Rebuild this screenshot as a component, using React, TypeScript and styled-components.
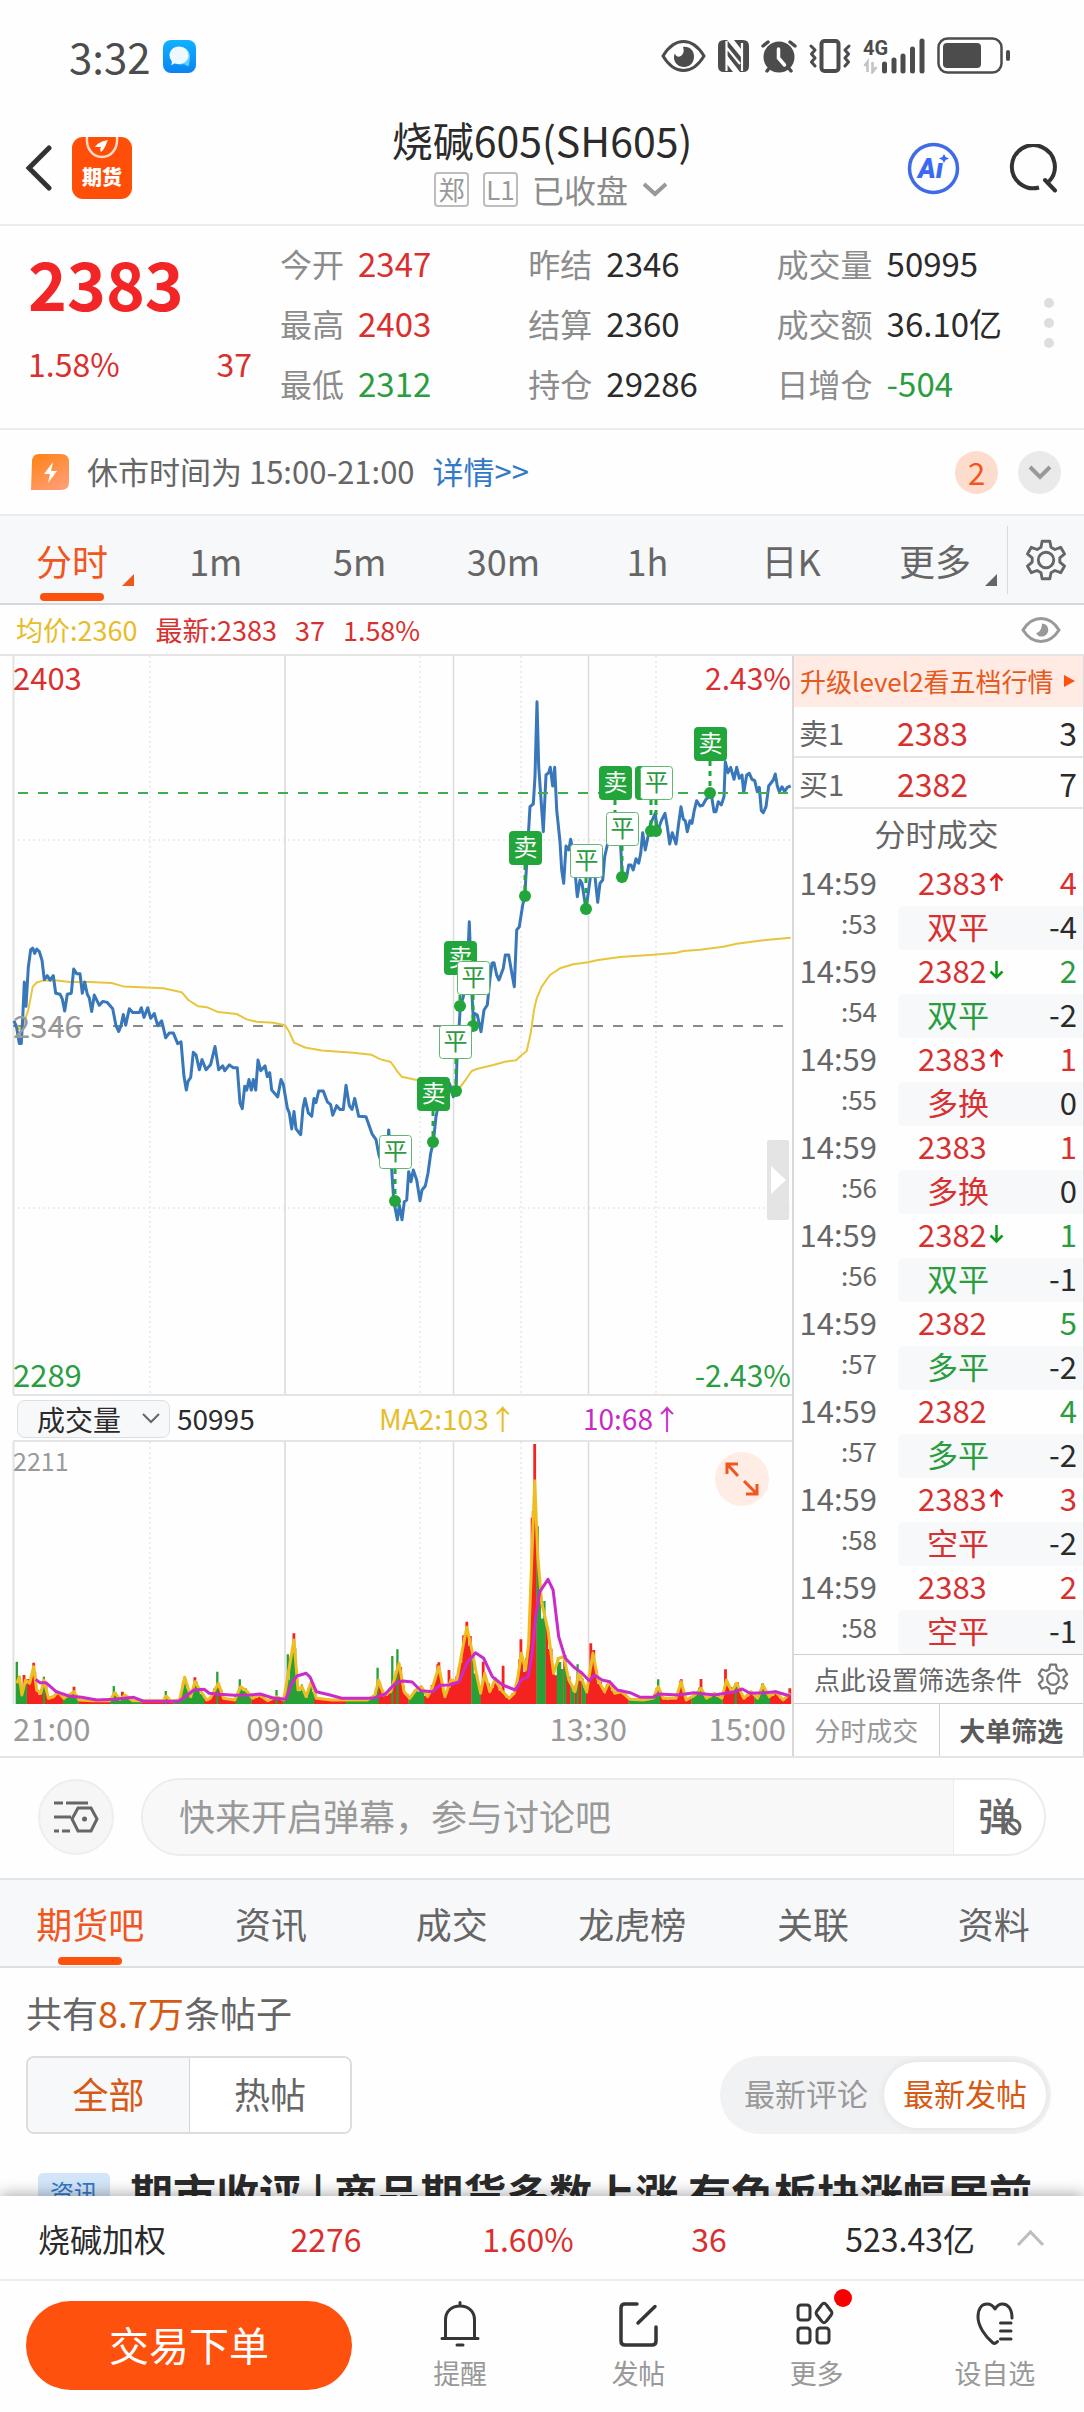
import React, { useState } from 'react';
import styled, { createGlobalStyle } from 'styled-components';

const C = {
  red: '#d9302f',
  up: '#f22626',
  green: '#2a9d3f',
  orange: '#f0561d',
  brand: '#ff510e',
  ink: '#2b2b2b',
  text: '#666666',
  mute: '#8c8c8c',
  faint: '#999999',
  line: '#e4e4e4',
  panel: '#f7f8fa',
};

type Tone = 'red' | 'green' | 'ink';

const GlobalStyle = createGlobalStyle`
  *, *::before, *::after { box-sizing: border-box; }
  html, body, #root { height: 100%; }
  body {
    margin: 0;
    background: #fefefe;
    color: ${C.ink};
    font-family: "Noto Sans CJK SC", "Noto Sans", sans-serif;
    overflow: hidden;
  }
  button, input, select {
    font: inherit;
    color: inherit;
    border: 0;
    padding: 0;
    margin: 0;
    background: none;
    border-radius: 0;
  }
  button { cursor: pointer; }
  a { text-decoration: none; }
  svg { display: block; flex: none; }
`;

/* ---------- shell ---------- */

const Shell = styled.div`
  display: flex;
  flex-direction: column;
  height: 100vh;
  background: #fefefe;
`;

const Scroller = styled.main`
  flex: 1;
  min-height: 0;
  overflow-y: auto;
  scrollbar-width: none;
`;

/* ---------- status bar ---------- */

const StatusBar = styled.div`
  display: flex;
  align-items: center;
  justify-content: space-between;
  height: 112px;
  padding: 0 74px 0 69px;
  color: #4c4c4c;
`;

const StatusGroup = styled.div`
  display: flex;
  align-items: center;
  gap: 12px;
`;

const Clock = styled.span`
  font-size: 42px;
  line-height: 48px;
`;

const StatusIcons = () => (
  <StatusGroup>
    <svg width="45" height="32" viewBox="0 0 45 32" fill="none" stroke="#4c4c4c" strokeWidth="3">
      <path d="M2 16C8 6 15 1.500 22.500 1.500S37 6 43 16C37 26 30 30.500 22.500 30.500S8 26 2 16Z" />
      <path d="M22 7c6-1 11 3 11 9.500S28.500 27 23 27s-10-4-10-9.500c0-1.500.2-2.500.8-4 1 3 3.500 4 6 2.500 3-2 3.500-5 2.200-9Z" fill="#4c4c4c" stroke="none" />
    </svg>
    <svg width="31" height="32" viewBox="0 0 31 32">
      <path d="M6 0h3l14 17V9L16 0h9q6 0 6 6v20q0 6-6 6h-3L8 14v9l7 9H6q-6 0-6-6V6q0-6 6-6Z" fill="#4c4c4c" />
      <path d="M8.500 1v30M9 8l13 16M24 3v28" stroke="#fefefe" strokeWidth="2.200" fill="none" />
    </svg>
    <svg width="36" height="34" viewBox="0 0 36 34" fill="none" stroke="#4c4c4c" strokeWidth="4" strokeLinecap="round">
      <circle cx="18" cy="18" r="15.500" fill="#4c4c4c" stroke="none" />
      <path d="M2 7l5-4M34 7l-5-4M6 32l4-5M30 32l-4-5" strokeWidth="3.500" />
      <path d="M17.500 10v9l6 7" stroke="#fefefe" strokeWidth="3.500" />
    </svg>
    <svg width="42" height="34" viewBox="0 0 42 34" fill="none" stroke="#4c4c4c" strokeWidth="3" strokeLinejoin="round" strokeLinecap="round">
      <rect x="12.500" y="2" width="17" height="30" rx="3" strokeWidth="4" />
      <path d="M2 7l4 4-3.500 4L6 19l-3.500 4L6 27M40 7l-4 4 3.500 4L36 19l3.500 4L36 27" />
    </svg>
    <svg width="62" height="36" viewBox="0 0 62 36">
      <text x="0" y="17" fontSize="20" fontWeight="700" fill="#4c4c4c" fontFamily="Roboto, sans-serif">4G</text>
      <path d="M4.500 34V24l-3 4M9.500 24v10l4-5" stroke="#c4c4c4" strokeWidth="2.600" fill="none" />
      <path d="M21.500 26v7M31 22v11M40 18v15M49.500 11v22M59 3v30" stroke="#4c4c4c" strokeWidth="5" strokeLinecap="round" />
    </svg>
    <svg width="73" height="38" viewBox="0 0 73 38">
      <rect x="1.500" y="1.500" width="63" height="34" rx="9" fill="none" stroke="#4c4c4c" strokeWidth="2.500" />
      <rect x="6" y="6" width="38" height="25" rx="4" fill="#4c4c4c" />
      <rect x="69" y="13" width="4" height="11" rx="2" fill="#4c4c4c" />
    </svg>
  </StatusGroup>
);

const MessageBadge = () => (
  <svg width="33" height="33" viewBox="0 0 33 33">
    <defs>
      <linearGradient id="msg" x1="0" y1="0" x2="0" y2="1">
        <stop offset="0" stopColor="#0fb2ff" />
        <stop offset="1" stopColor="#0a83f2" />
      </linearGradient>
    </defs>
    <rect width="33" height="33" rx="8" fill="url(#msg)" />
    <path d="M17 7c6 0 10 4 10 9 0 4-1 6-1 10-2 0-4-1-5-2-8 2-14-2-14-8 0-5 4-9 10-9Z" fill="#5fd0ff" />
    <path d="M16 6.500c5.500 0 9.500 4 9.500 8.800S21.500 24 16 24c-1.500 0-3-.3-4-.8-1 .8-2.500 1.500-4 1.500.8-1 1-2.300.8-3.500A8.500 8.500 0 0 1 6.500 15.300c0-4.800 4-8.800 9.500-8.800Z" fill="#eef8ff" />
  </svg>
);

/* ---------- title bar ---------- */

const TitleBar = styled.header`
  display: grid;
  grid-template-columns: 1fr auto 1fr;
  align-items: center;
  height: 114px;
  padding: 0 26px;
  border-bottom: 2px solid #ececec;
`;

const BarSide = styled.div<{ $end?: boolean; $gap: number }>`
  display: flex;
  align-items: center;
  justify-content: ${(p) => (p.$end ? 'flex-end' : 'flex-start')};
  gap: ${(p) => p.$gap}px;
`;

const TitleStack = styled.div`
  display: flex;
  flex-direction: column;
  align-items: center;
  padding-bottom: 10px;
`;

const Title = styled.h1`
  margin: 0;
  font-size: 41px;
  font-weight: 400;
  line-height: 52px;
`;

const Subtitle = styled.button`
  display: flex;
  align-items: center;
  gap: 14px;
  height: 48px;
  padding-left: 18px;
  font-size: 32px;
  line-height: 44px;
  color: ${C.mute};
`;

const Tag = styled.span`
  display: grid;
  place-items: center;
  width: 35px;
  height: 35px;
  border: 2px solid #bdbdbd;
  border-radius: 4px;
  font-size: 26px;
  line-height: 30px;
  color: #999;
`;

const IconButton = styled.button`
  display: grid;
  place-items: center;
`;

const Chevron = ({ w, h, color, width = 4, up = false }: { w: number; h: number; color: string; width?: number; up?: boolean }) => (
  <svg width={w} height={h} viewBox={`0 0 ${w} ${h}`} fill="none" stroke={color} strokeWidth={width}>
    <path d={up ? `M2 ${h - 2}L${w / 2} 3L${w - 2} ${h - 2}` : `M2 2L${w / 2} ${h - 3}L${w - 2} 2`} />
  </svg>
);

const LogoBox = styled.div`
  display: flex;
  flex-direction: column;
  align-items: center;
  width: 60px;
  height: 62px;
  border-radius: 11px;
  background: #ff4e08;
  color: #fff;
  font-size: 20px;
  font-weight: 900;
  line-height: 30px;
`;

const Logo = () => (
  <LogoBox>
    <svg width="40" height="25" viewBox="0 0 40 25">
      <path d="M5 0C4 12 11 20 20 20S36 12 35 0" fill="none" stroke="#ffd9c8" strokeWidth="2.500" />
      <path d="M13 10c3-4 7-6 13-7-2 3-2 8-7 12-1-2-1-3 0-5-2 0-4 0-6 0Z" fill="#fff" />
    </svg>
    期货
  </LogoBox>
);

/* ---------- quote ---------- */

const Quote = styled.section`
  display: flex;
  height: 204px;
  padding: 7px 30px 0 28px;
  border-bottom: 2px solid #ececec;
`;

const PriceBlock = styled.div`
  width: 224px;
  margin-right: 28px;
  color: ${C.red};
`;

const BigPrice = styled.div`
  font-size: 66px;
  font-weight: 700;
  line-height: 98px;
  color: ${C.up};
`;

const PriceDelta = styled.div`
  display: flex;
  justify-content: space-between;
  font-size: 32px;
  line-height: 64px;
`;

const Stats = styled.dl`
  flex: 1;
  display: grid;
  grid-template-columns: 13fr 13fr 14fr;
  grid-auto-rows: 60px;
  margin: 0;
`;

const Stat = styled.div`
  display: flex;
  align-items: center;
  gap: 14px;
  font-size: 32px;
  line-height: 60px;
  white-space: nowrap;
`;

const StatName = styled.dt`
  color: ${C.mute};
`;

const StatValue = styled.dd<{ $tone: Tone }>`
  margin: 0;
  font-size: 33px;
  color: ${(p) => C[p.$tone]};
`;

const Dots = styled.div`
  display: flex;
  flex-direction: column;
  justify-content: center;
  gap: 10px;
  height: 180px;
`;

const Dot = styled.i`
  width: 10px;
  height: 10px;
  border-radius: 50%;
  background: #dedede;
`;

const STATS: [string, string, Tone][] = [
  ['今开', '2347', 'red'], ['昨结', '2346', 'ink'], ['成交量', '50995', 'ink'],
  ['最高', '2403', 'red'], ['结算', '2360', 'ink'], ['成交额', '36.10亿', 'ink'],
  ['最低', '2312', 'green'], ['持仓', '29286', 'ink'], ['日增仓', '-504', 'green'],
];

/* ---------- notice ---------- */

const Notice = styled.section`
  display: flex;
  align-items: center;
  height: 86px;
  padding: 0 23px 0 31px;
  border-bottom: 2px solid #ececec;
  font-size: 31px;
  line-height: 40px;
  color: ${C.text};
`;

const NoticeText = styled.p`
  flex: 1;
  margin: 0 0 2px 18px;
`;

const NoticeLink = styled.a`
  margin-left: 18px;
  color: #3279c8;
`;

const Round = styled.button<{ $bg: string }>`
  display: grid;
  place-items: center;
  width: 43px;
  height: 43px;
  margin-left: 20px;
  border-radius: 50%;
  background: ${(p) => p.$bg};
  color: ${C.orange};
  font-size: 31px;
  line-height: 40px;
`;

/* ---------- period tabs ---------- */

const PeriodBar = styled.nav`
  display: flex;
  align-items: center;
  height: 89px;
  background: ${C.panel};
  border-bottom: 2px solid #d6d9dc;
`;

const PeriodTab = styled.button<{ $active?: boolean }>`
  position: relative;
  flex: 1;
  height: 87px;
  font-size: 36px;
  line-height: 84px;
  color: ${(p) => (p.$active ? C.orange : C.text)};
  &::after {
    content: '';
    position: absolute;
    left: 50%;
    bottom: 2px;
    width: 64px;
    height: 8px;
    margin-left: -32px;
    border-radius: 4px;
    background: ${(p) => (p.$active ? C.brand : 'transparent')};
  }
`;

const Corner = styled.i`
  position: absolute;
  right: 10px;
  bottom: 17px;
  border-left: 12px solid transparent;
  border-bottom: 12px solid currentColor;
`;

const PeriodSettings = styled.button`
  display: grid;
  place-items: center;
  width: 77px;
  height: 68px;
  border-left: 1px solid #d9dbdd;
`;

const Gear = ({ size, color, width }: { size: number; color: string; width: number }) => (
  <svg width={size} height={size} viewBox="0 0 38 38" fill="none" stroke={color} strokeWidth={width} strokeLinejoin="round">
    <path d="M15.500 2h7l1 5.500 3.500 2 5.300-2 3.500 6-4.300 3.600v3.800l4.300 3.600-3.500 6-5.300-2-3.500 2-1 5.500h-7l-1-5.500-3.500-2-5.300 2-3.500-6 4.300-3.600v-3.800L2.200 13.500l3.500-6 5.300 2 3.500-2Z" />
    <circle cx="19" cy="19" r="7" />
  </svg>
);

/* ---------- indicator legend ---------- */

const Legend = styled.div`
  display: flex;
  align-items: center;
  gap: 18px;
  height: 49px;
  padding: 0 23px 0 16px;
  font-size: 27px;
  line-height: 40px;
  color: ${C.red};
`;

const Avg = styled.span`
  color: #e6bd28;
`;

const LegendEye = styled.button`
  margin-left: auto;
`;

/* ---------- market area ---------- */

const Market = styled.section`
  display: grid;
  grid-template-columns: minmax(0, 1fr) 292px;
  border-top: 2px solid ${C.line};
  border-bottom: 2px solid ${C.line};
`;

const ChartColumn = styled.div`
  position: relative;
  min-width: 0;
`;

const Plot = styled.svg`
  width: 100%;
  height: auto;
  overflow: visible;
  font-family: inherit;
`;

const Handle = styled.button`
  position: absolute;
  right: 3px;
  top: 484px;
  display: grid;
  place-items: center;
  width: 22px;
  height: 80px;
  border-radius: 2px;
  background: #e4e4e4;
`;

const Expand = styled.button`
  position: absolute;
  right: 23px;
  bottom: 250px;
  display: grid;
  place-items: center;
  width: 54px;
  height: 54px;
  border-radius: 50%;
  background: #ffece4;
`;

const VolumeHead = styled.div`
  display: grid;
  grid-template-columns: 160px 202px 204px 1fr;
  align-items: center;
  height: 48px;
  margin-left: 13px;
  padding-left: 4px;
  border-top: 2px solid ${C.line};
  border-bottom: 2px solid ${C.line};
  font-size: 28px;
  line-height: 40px;
`;

const SelectWrap = styled.label`
  position: relative;
  display: block;
  width: 153px;
  height: 38px;
`;

const Select = styled.select`
  appearance: none;
  width: 153px;
  height: 38px;
  padding-left: 19px;
  border: 1px solid #dcdfe3;
  border-radius: 8px;
  background: ${C.panel};
  font-size: 28px;
  line-height: 36px;
`;

const SelectArrow = styled.span`
  position: absolute;
  right: 9px;
  top: 13px;
  pointer-events: none;
`;

const Ma = styled.span<{ $c: string }>`
  color: ${(p) => p.$c};
`;

const AxisRow = styled.div`
  display: grid;
  grid-template-columns: 209fr 152fr 303fr 128fr;
  height: 51px;
  font-size: 31px;
  line-height: 48px;
  color: ${C.faint};
`;

const AxisLabel = styled.span<{ $align: 'left' | 'center' | 'right'; $pad?: number }>`
  text-align: ${(p) => p.$align};
  padding: 0 ${(p) => (p.$align === 'right' ? p.$pad : 0)}px 0 ${(p) => (p.$align === 'left' ? p.$pad : 0)}px;
`;

type P = [number, number];

const line = (pts: P[], f: (p: P) => P) =>
  pts.map(f).map(([x, y], i) => `${i ? 'L' : 'M'}${x.toFixed(1)} ${y.toFixed(1)}`).join('');

const night = ([x, y]: P): P => [x / 3, 650 + y / 2.063];
const day = ([x, y]: P): P => [380 + x / 3, 650 + y / 3];
const vol = ([x, y]: P): P => [x / 1.96, 1390 + y / 3];

const NIGHT_PRICE: P[] = [[42,765],[50,780],[58,812],[64,812],[68,760],[73,685],[78,735],[85,655],[92,618],[98,615],[104,626],[110,617],[118,622],[126,640],[133,680],[142,672],[150,681],[160,672],[167,708],[180,710],[187,720],[194,745],[202,710],[214,708],[221,658],[230,668],[240,668],[247,708],[254,685],[262,710],[268,718],[275,746],[283,712],[298,733],[308,725],[322,727],[338,740],[348,775],[356,787],[363,775],[370,752],[377,774],[388,740],[398,748],[418,748],[424,738],[432,758],[443,738],[452,760],[463,750],[473,775],[485,765],[497,800],[508,790],[520,790],[533,812],[543,808],[552,880],[559,908],[564,890],[572,882],[580,830],[588,835],[598,866],[606,845],[618,866],[632,855],[645,818],[656,866],[668,858],[674,868],[688,856],[700,862],[712,862],[720,935],[727,946],[734,900],[740,908],[747,886],[754,908],[760,886],[767,908],[774,846],[782,868],[795,858],[802,880],[809,872],[815,908],[833,922],[843,886],[850,896],[862,945],[868,955],[875,988],[882,952],[888,988],[902,1000],[909,945],[915,925],[925,955],[935,962],[942,925],[948,934],[956,910],[970,910],[982,932],[992,938],[998,960],[1010,940],[1020,948],[1030,948],[1038,898],[1048,940],[1056,948],[1064,925],[1076,962],[1098,963],[1116,998],[1128,1010],[1136,1040],[1145,1060],[1160,1050],[1166,990],[1174,1060],[1181,1135],[1192,1175]];

const DAY_PRICE: P[] = [[52,1709],[58,1665],[66,1709],[73,1655],[80,1650],[86,1565],[93,1595],[100,1560],[110,1590],[120,1652],[126,1620],[136,1608],[144,1570],[152,1510],[160,1477],[168,1400],[172,1380],[176,1300],[190,1310],[208,1300],[220,1340],[228,1322],[232,1200],[238,1120],[241,1070],[250,1040],[262,960],[268,815],[275,1020],[281,1128],[283,1090],[292,1095],[303,1145],[312,1080],[322,1065],[330,985],[336,940],[342,938],[350,975],[357,990],[370,955],[376,915],[386,915],[392,950],[403,1010],[410,840],[418,830],[428,765],[434,740],[440,640],[450,470],[460,462],[465,380],[471,155],[476,350],[490,545],[498,375],[506,368],[511,352],[518,408],[524,352],[530,480],[540,575],[545,660],[551,700],[558,588],[566,600],[572,568],[580,610],[592,740],[600,690],[606,700],[618,778],[630,690],[640,620],[645,680],[653,757],[660,700],[668,690],[674,620],[682,585],[700,540],[715,520],[722,590],[727,682],[740,680],[746,645],[753,645],[760,660],[768,626],[776,640],[782,610],[788,548],[796,600],[802,570],[812,520],[826,490],[832,545],[845,510],[855,490],[862,530],[869,582],[877,548],[888,582],[896,520],[903,470],[910,508],[916,512],[922,545],[930,512],[936,520],[942,485],[950,452],[960,468],[968,466],[978,448],[988,440],[995,440],[1002,485],[1008,485],[1015,455],[1024,465],[1032,440],[1036,335],[1044,368],[1052,352],[1062,388],[1070,352],[1078,385],[1086,375],[1091,428],[1100,375],[1108,370],[1116,388],[1124,392],[1132,425],[1138,412],[1144,482],[1150,488],[1158,470],[1166,408],[1180,390],[1186,372],[1192,408],[1198,425],[1206,410],[1214,425],[1222,412],[1232,408]];

const NIGHT_AVG: P[] = [[42,765],[58,782],[68,778],[85,742],[98,695],[110,686],[130,682],[170,682],[210,685],[270,685],[335,687],[370,694],[490,698],[545,706],[565,722],[595,735],[620,737],[655,747],[710,751],[740,762],[770,767],[820,769],[855,774],[868,788],[882,810],[915,820],[965,826],[1060,831],[1115,835],[1140,844],[1172,850],[1185,862]];

const DAY_AVG: P[] = [[50,1262],[65,1280],[110,1290],[180,1300],[225,1310],[240,1312],[260,1285],[275,1263],[290,1257],[340,1245],[375,1235],[408,1231],[425,1215],[440,1203],[452,1150],[462,1080],[470,1045],[485,1010],[510,975],[540,955],[580,943],[625,937],[650,931],[720,921],[820,914],[890,908],[910,903],[960,899],[1030,890],[1070,881],[1150,871],[1232,863]];

const VOL_MA2: P[] = [[33,880],[38,860],[43,915],[50,870],[58,880],[66,830],[72,900],[80,910],[86,870],[95,925],[105,920],[113,905],[125,925],[145,905],[155,930],[180,932],[215,932],[225,908],[235,928],[245,915],[260,932],[320,932],[326,918],[335,934],[352,930],[362,862],[374,920],[382,875],[392,900],[405,930],[412,925],[428,880],[438,925],[460,930],[472,890],[485,905],[495,925],[508,915],[525,932],[542,920],[556,930],[565,850],[576,750],[584,900],[592,890],[600,920],[610,875],[620,925],[650,930],[720,930],[735,915],[742,870],[752,915],[766,905],[782,820],[792,905],[803,925],[815,900],[826,890],[838,920],[848,890],[860,830],[872,920],[884,870],[895,875],[905,790],[915,712],[925,780],[935,860],[942,910],[950,850],[960,905],[970,870],[985,905],[998,925],[1008,910],[1015,860],[1022,790],[1030,840],[1036,760],[1042,520],[1048,272],[1054,500],[1062,640],[1074,720],[1085,850],[1095,805],[1105,800],[1115,870],[1127,905],[1135,845],[1150,905],[1162,790],[1172,870],[1185,905],[1194,875],[1205,910],[1218,905],[1235,928],[1260,930],[1280,925],[1290,890],[1300,925],[1325,925],[1335,875],[1345,930],[1362,915],[1374,895],[1385,925],[1400,910],[1415,925],[1424,870],[1434,905],[1444,880],[1458,925],[1472,905],[1485,925],[1495,885],[1508,920],[1520,905],[1535,930],[1549,910]];

const VOL_MA10: P[] = [[70,868],[78,878],[90,878],[110,905],[135,918],[160,922],[190,930],[225,928],[262,922],[280,933],[350,934],[365,918],[380,900],[400,898],[410,910],[430,913],[460,916],[490,915],[510,912],[535,924],[560,928],[572,880],[582,858],[600,850],[608,862],[620,905],[645,914],[670,925],[730,925],[755,912],[775,880],[790,873],[808,876],[825,902],[848,905],[862,886],[880,885],[900,875],[915,820],[932,788],[948,805],[965,860],[985,885],[1010,900],[1022,870],[1035,860],[1042,800],[1050,680],[1058,605],[1074,568],[1084,600],[1095,740],[1108,805],[1125,832],[1140,848],[1155,872],[1165,855],[1180,870],[1195,875],[1210,900],[1235,908],[1255,922],[1280,922],[1290,912],[1330,915],[1360,908],[1400,915],[1440,905],[1455,897],[1470,910],[1500,908],[1520,905],[1549,918]];

const SPIKES: [number, number, 'r' | 'g'][] = [[33,815,'g'],[47,855,'r'],[66,818,'r'],[86,860,'g'],[145,890,'r'],[223,888,'g'],[240,905,'r'],[325,903,'g'],[362,860,'g'],[382,862,'r'],[426,845,'g'],[470,868,'g'],[542,900,'g'],[564,793,'g'],[576,730,'r'],[740,833,'g'],[769,798,'g'],[779,778,'g'],[858,823,'r'],[880,840,'r'],[915,695,'r'],[947,815,'r'],[986,827,'r'],[1021,748,'r'],[1043,383,'r'],[1048,162,'r'],[1108,795,'g'],[1132,823,'g'],[1158,760,'r'],[1290,868,'g'],[1334,872,'r'],[1374,867,'r'],[1422,838,'r'],[1442,878,'g'],[1495,880,'g'],[1548,895,'r']];

const GREEN_RUNS: P[] = [[562,573],[926,938],[1053,1068],[1089,1106],[1118,1128]];
const RED_RUNS: P[] = [[52,72],[830,862],[884,925],[942,1052],[1068,1088],[1150,1200]];

const inRuns = (runs: P[], x: number) => runs.some(([a, b]) => x >= a && x <= b);

const level = (x: number) => {
  for (let i = 1; i < VOL_MA2.length; i++) {
    const [x0, y0] = VOL_MA2[i - 1];
    const [x1, y1] = VOL_MA2[i];
    if (x <= x1) return y0 + ((y1 - y0) * (x - x0)) / (x1 - x0);
  }
  return 925;
};

const BASE = 943;
const bars = { r: '', g: '' };
for (let i = 0, x = 33; x < 1550; i++, x += 4.4) {
  const noise = ((i * 7919 + 104729) % 97) / 97;
  const height = (BASE - level(x)) * (0.75 + noise * 0.45);
  const tone = inRuns(GREEN_RUNS, x) ? 'g' : inRuns(RED_RUNS, x) ? 'r' : (i * 31 + (i % 7) * 13) % 11 < 5 ? 'g' : 'r';
  const [px, py] = vol([x, BASE - height]);
  bars[tone] += `M${px.toFixed(1)} 1704V${py.toFixed(1)}`;
}
SPIKES.forEach(([x, y, tone]) => {
  const [px, py] = vol([x, y]);
  bars[tone] += `M${px.toFixed(1)} 1704V${py.toFixed(1)}`;
});

type MarkProps = { kind: '卖' | '平'; x: number; y: number; dx: number; dy: number; hidden?: boolean };

const MARKS: MarkProps[] = [
  { kind: '卖', x: 694, y: 727, dx: 710, dy: 793 },
  { kind: '卖', x: 599, y: 766, dx: 615, dy: 820, hidden: true },
  { kind: '卖', x: 635, y: 766, dx: 651, dy: 831 },
  { kind: '平', x: 640, y: 766, dx: 656, dy: 831 },
  { kind: '平', x: 606, y: 812, dx: 622, dy: 877 },
  { kind: '平', x: 570, y: 844, dx: 586, dy: 909 },
  { kind: '卖', x: 509, y: 831, dx: 525, dy: 896 },
  { kind: '卖', x: 444, y: 941, dx: 460, dy: 1006 },
  { kind: '平', x: 457, y: 961, dx: 473, dy: 1026 },
  { kind: '平', x: 439, y: 1025, dx: 456, dy: 1091 },
  { kind: '卖', x: 417, y: 1077, dx: 433, dy: 1142 },
  { kind: '平', x: 379, y: 1135, dx: 395, dy: 1201 },
];

const MARK = '#22a53b';

const PriceChart = () => (
  <Plot viewBox="0 656 792 738" role="img" aria-label="分时走势">
    <g stroke="#ededed" strokeWidth="2" strokeDasharray="2 3">
      <path d="M150 656V1394M420 656V1394M521 656V1394M656 656V1394M13 840H791M13 1208H791" />
    </g>
    <g stroke="#dcdcdc" strokeWidth="2">
      <path d="M13.500 656V1394M285 656V1394" stroke="#e2e2e2" />
      <path d="M453.500 656V1394M588.500 656V1394" strokeWidth="1.500" />
    </g>
    <path d="M13 1026H785" stroke="#8a8a8a" strokeWidth="2" strokeDasharray="10 10" />
    <g fill="none" strokeLinejoin="round">
      <path d={line(NIGHT_AVG, night) + line(DAY_AVG, day).replace('M', 'L')} stroke="#e9c53c" strokeWidth="2" />
      <path d={line(NIGHT_PRICE, night) + line(DAY_PRICE, day).replace('M', 'L')} stroke="#3877ba" strokeWidth="3" />
    </g>
    <path d="M18 793H790" stroke="#3fae4c" strokeWidth="2" strokeDasharray="10 10" />
    {MARKS.map((m) => (
      <g key={`${m.x}-${m.y}`}>
        <path d={`M${m.dx} ${m.y + 34}V${m.dy}`} stroke={MARK} strokeWidth="3" strokeDasharray="5 5" />
        {!m.hidden && <circle cx={m.dx} cy={m.dy} r="6" fill={MARK} />}
      </g>
    ))}
    {MARKS.map((m) => (
      <g key={`${m.x}-${m.y}`}>
        <rect x={m.x + 0.5} y={m.y + 0.5} width="32" height="33" rx="3" fill={m.kind === '卖' ? MARK : '#fff'} stroke={m.kind === '卖' ? MARK : '#5fb870'} />
        <text x={m.x + 16.5} y={m.y + 25} fontSize="24" textAnchor="middle" fill={m.kind === '卖' ? '#fff' : '#2b9a40'}>{m.kind}</text>
      </g>
    ))}
    <g fontSize="31">
      <text x="13" y="690" fill={C.red}>2403</text>
      <text x="791" y="690" fontSize="30" fill={C.red} textAnchor="end">2.43%</text>
      <text x="13" y="1038" fill="#999">2346</text>
      <text x="13" y="1387" fill={C.green}>2289</text>
      <text x="791" y="1387" fontSize="30" fill={C.green} textAnchor="end">-2.43%</text>
    </g>
  </Plot>
);

const VolumeChart = () => (
  <Plot viewBox="0 1442 792 262" role="img" aria-label="成交量">
    <path d="M150 1442V1704M420 1442V1704M521 1442V1704M656 1442V1704" stroke="#ededed" strokeWidth="2" strokeDasharray="2 3" />
    <g stroke="#dcdcdc">
      <path d="M13.500 1442V1704M285 1442V1704" strokeWidth="2" stroke="#e2e2e2" />
      <path d="M453.500 1442V1704M588.500 1442V1704" strokeWidth="1.500" />
    </g>
    <path d={bars.r} stroke="#f5231f" strokeWidth="2.800" />
    <path d={bars.g} stroke="#27a035" strokeWidth="2.300" />
    <g fill="none" strokeLinejoin="round">
      <path d={line(VOL_MA2, vol)} stroke="#eebd1f" strokeWidth="3" />
      <path d={line(VOL_MA10, vol)} stroke="#cb2bcb" strokeWidth="3" />
    </g>
    <text x="13" y="1471" fontSize="25" fill="#999">2211</text>
  </Plot>
);

/* ---------- order book ---------- */

const Side = styled.aside`
  display: flex;
  flex-direction: column;
  border-left: 2px solid #d9d9d9;
  border-right: 1px solid #d9d9d9;
`;

const Banner = styled.a`
  display: flex;
  align-items: center;
  gap: 10px;
  height: 51px;
  padding: 0 0 2px 6px;
  background: #ffebe3;
  color: #e65a1e;
  font-size: 26px;
  line-height: 36px;
  white-space: nowrap;
`;

const Triangle = styled.i<{ $c: string; $w: number; $h: number }>`
  border-left: ${(p) => p.$w}px solid ${(p) => p.$c};
  border-top: ${(p) => p.$h / 2}px solid transparent;
  border-bottom: ${(p) => p.$h / 2}px solid transparent;
`;

const BookRow = styled.div`
  display: grid;
  grid-template-columns: 98px 1fr auto;
  height: 51px;
  padding: 0 6px 0 5px;
  border-bottom: 2px solid ${C.line};
  font-size: 32px;
  line-height: 50px;
`;

const BookName = styled.span`
  color: ${C.text};
  font-size: 29px;
`;

const Colored = styled.span<{ $tone: Tone }>`
  color: ${(p) => C[p.$tone]};
`;

const TickTitle = styled.h2`
  margin: 0;
  font-size: 31px;
  font-weight: 400;
  line-height: 48px;
  height: 53px;
  padding-right: 4px;
  text-align: center;
  color: ${C.text};
`;

const Ticks = styled.table`
  width: 100%;
  border-collapse: collapse;
  font-size: 31px;
  line-height: 44px;
  td { padding: 0; height: 44px; white-space: nowrap; }
`;

const TimeCell = styled.td<{ $small?: boolean }>`
  width: 104px;
  padding-right: 21px !important;
  text-align: right;
  color: ${C.text};
  font-size: ${(p) => (p.$small ? 26 : 31)}px;
  line-height: ${(p) => (p.$small ? 34 : 40)}px;
  vertical-align: top;
`;

const PriceCell = styled.td<{ $tone: Tone; $fill?: boolean }>`
  color: ${(p) => C[p.$tone]};
  padding-left: ${(p) => (p.$fill ? 29 : 20)}px !important;
  background: ${(p) => (p.$fill ? C.panel : 'transparent')};
  border-radius: 6px 0 0 6px;
  line-height: 40px;
  vertical-align: top;
`;

const VolCell = styled.td<{ $tone: Tone; $fill?: boolean }>`
  width: 60px;
  padding-right: 6px !important;
  text-align: right;
  line-height: 40px;
  vertical-align: top;
  color: ${(p) => C[p.$tone]};
  background: ${(p) => (p.$fill ? C.panel : 'transparent')};
`;

const PriceFlex = styled.span`
  display: flex;
  align-items: center;
  gap: 2px;
`;

const Arrow = ({ up }: { up: boolean }) => (
  <svg width="15" height="20" viewBox="0 0 15 20" fill="none" stroke={up ? '#e02020' : '#0c9a1a'} strokeWidth="2.500">
    <path d={up ? 'M7.500 19V3M1.500 8.500l6-6 6 6' : 'M7.500 1v16M1.500 11.500l6 6 6-6'} />
  </svg>
);

type Tick = { price: string; dir?: 'up' | 'down'; vol: string; sec: string; kind: string; oi: string; tone: 'red' | 'green' };

const TICKS: Tick[] = [
  { price: '2383', dir: 'up', vol: '4', sec: ':53', kind: '双平', oi: '-4', tone: 'red' },
  { price: '2382', dir: 'down', vol: '2', sec: ':54', kind: '双平', oi: '-2', tone: 'green' },
  { price: '2383', dir: 'up', vol: '1', sec: ':55', kind: '多换', oi: '0', tone: 'red' },
  { price: '2383', vol: '1', sec: ':56', kind: '多换', oi: '0', tone: 'red' },
  { price: '2382', dir: 'down', vol: '1', sec: ':56', kind: '双平', oi: '-1', tone: 'green' },
  { price: '2382', vol: '5', sec: ':57', kind: '多平', oi: '-2', tone: 'green' },
  { price: '2382', vol: '4', sec: ':57', kind: '多平', oi: '-2', tone: 'green' },
  { price: '2383', dir: 'up', vol: '3', sec: ':58', kind: '空平', oi: '-2', tone: 'red' },
  { price: '2383', vol: '2', sec: ':58', kind: '空平', oi: '-1', tone: 'red' },
];

const FilterRow = styled.button`
  display: flex;
  align-items: center;
  justify-content: space-between;
  height: 50px;
  margin-top: auto;
  padding: 0 14px 0 20px;
  border-top: 1px solid #cfcfcf;
  border-bottom: 1px solid #cfcfcf;
  color: ${C.text};
  font-size: 26px;
  line-height: 40px;
`;

const SideTabs = styled.div`
  display: grid;
  grid-template-columns: 1fr 1fr;
  height: 52px;
`;

const SideTab = styled.button<{ $active?: boolean }>`
  font-size: 26px;
  line-height: 48px;
  color: ${(p) => (p.$active ? '#5a5a5a' : C.faint)};
  font-weight: ${(p) => (p.$active ? 700 : 400)};
  & + & { border-left: 1px solid #cfcfcf; }
`;

/* ---------- comment bar ---------- */

const CommentBar = styled.section`
  display: flex;
  align-items: center;
  gap: 27px;
  height: 120px;
  padding: 0 38px 2px;
`;

const CommentSettings = styled.button`
  display: grid;
  place-items: center;
  width: 76px;
  height: 76px;
  border: 2px solid #eeeeee;
  border-radius: 50%;
  background: #f6f6f6;
`;

const CommentField = styled.div`
  display: flex;
  flex: 1;
  height: 78px;
  border: 2px solid #ececec;
  border-radius: 39px;
  overflow: hidden;
  background: #fff;
`;

const CommentInput = styled.input`
  flex: 1;
  min-width: 0;
  padding: 0 36px 4px;
  background: #f8f8f8;
  border-right: 1px solid #ececec;
  font-size: 36px;
  outline: none;
  &::placeholder { color: ${C.faint}; opacity: 1; }
`;

const DanmuButton = styled.button`
  position: relative;
  width: 90px;
  padding: 0 4px 6px 0;
  text-align: center;
  font-size: 38px;
  font-weight: 500;
  line-height: 66px;
  color: ${C.text};
`;

const DanmuOff = styled.svg`
  position: absolute;
  right: 22px;
  bottom: 18px;
`;

/* ---------- community tabs ---------- */

const TopicTabs = styled.nav`
  display: flex;
  height: 90px;
  background: ${C.panel};
  border-top: 2px solid #e2e4e6;
  border-bottom: 2px solid #dcdee0;
`;

const TopicTab = styled(PeriodTab)`
  height: 86px;
  line-height: 82px;
  &::after { bottom: 1px; }
`;

const Feed = styled.section`
  padding: 0 33px 0 26px;
`;

const Total = styled.p`
  margin: 0;
  font-size: 36px;
  line-height: 88px;
  color: ${C.text};
`;

const Hot = styled.em`
  font-style: normal;
  color: #d65a14;
`;

const FilterLine = styled.div`
  display: flex;
  justify-content: space-between;
  align-items: center;
`;

const Segment = styled.div`
  display: grid;
  grid-template-columns: 1fr 1fr;
  width: 326px;
  height: 78px;
  border: 2px solid #dbdde0;
  border-radius: 8px;
  overflow: hidden;
`;

const SegmentItem = styled.button<{ $active: boolean }>`
  padding-bottom: 4px;
  font-size: 36px;
  line-height: 68px;
  color: ${(p) => (p.$active ? '#d65a14' : C.text)};
  background: ${(p) => (p.$active ? C.panel : '#fff')};
  & + & { border-left: 1px solid #d3d5d8; }
`;

const Toggle = styled.div`
  display: flex;
  height: 78px;
  padding: 6px 5px 6px 8px;
  border-radius: 39px;
  background: #f1f2f4;
`;

const ToggleItem = styled.button<{ $active: boolean }>`
  width: ${(p) => (p.$active ? 162 : 156)}px;
  height: 66px;
  padding-bottom: 4px;
  border-radius: 33px;
  font-size: 31px;
  line-height: 60px;
  color: ${(p) => (p.$active ? '#d65a14' : C.faint)};
  background: ${(p) => (p.$active ? '#fff' : 'transparent')};
  box-shadow: ${(p) => (p.$active ? '0 0 10px rgba(0, 0, 0, 0.08)' : 'none')};
`;

const Post = styled.article`
  display: flex;
  align-items: center;
  gap: 20px;
  margin: 28px 0 0 12px;
  white-space: nowrap;
`;

const PostTag = styled.span`
  width: 72px;
  height: 38px;
  border-radius: 5px;
  background: #d3e5f8;
  color: #3279c8;
  font-size: 24px;
  line-height: 38px;
  text-align: center;
`;

const PostTitle = styled.h3`
  margin: 0;
  font-size: 43px;
  font-weight: 700;
  line-height: 60px;
`;

/* ---------- dock ---------- */

const Dock = styled.footer`
  position: relative;
  background: #fefefe;
  box-shadow: 0 -2px 14px rgba(0, 0, 0, 0.32);
`;

const IndexRow = styled.button`
  display: grid;
  grid-template-columns: 194fr 188fr 216fr 146fr 234fr auto;
  align-items: center;
  justify-items: center;
  width: 100%;
  height: 85px;
  padding: 0 39px 0 38px;
  border-bottom: 2px solid #ececec;
  font-size: 32px;
  line-height: 44px;
`;

const IndexName = styled.span`
  justify-self: start;
`;

const IndexAmount = styled.span`
  justify-self: end;
  margin-right: 41px;
`;

const DockNav = styled.nav`
  display: grid;
  grid-template-columns: 345px repeat(4, 1fr);
  align-items: start;
  height: 131px;
  padding-left: 26px;
`;

const TradeButton = styled.button`
  width: 326px;
  height: 89px;
  margin-top: 20px;
  padding-bottom: 4px;
  border-radius: 45px;
  background: ${C.brand};
  color: #fff;
  font-size: 40px;
  line-height: 80px;
`;

const NavItem = styled.button`
  display: flex;
  flex-direction: column;
  align-items: center;
  gap: 6px;
  padding-top: 20px;
  font-size: 27px;
  line-height: 40px;
  color: ${C.faint};
`;

const NavIcon = styled.span`
  position: relative;
  display: block;
`;

const RedDot = styled.i`
  position: absolute;
  left: 40px;
  top: -12px;
  width: 18px;
  height: 18px;
  border-radius: 50%;
  background: #f80000;
`;

const navSvg = { width: 46, height: 46, viewBox: '0 0 46 46', fill: 'none', stroke: '#363636', strokeWidth: 3, strokeLinecap: 'round' as const, strokeLinejoin: 'round' as const };

const BellIcon = () => (
  <svg {...navSvg}><path d="M23 1.500V5M8.500 37V19C8.500 10 15 5 23 5s14.500 5 14.500 14v18M5 37.500h36M20 44h6" /></svg>
);
const PostIcon = () => (
  <svg {...navSvg}><path d="M22 3H10Q6 3 6 7v33q0 4 4 4h27q4 0 4-4V26M40 5.500L23 22" strokeWidth="3.500" /></svg>
);
const MoreIcon = () => (
  <svg {...navSvg}>
    <rect x="4" y="4" width="12" height="15" rx="3" />
    <rect x="4" y="27" width="12" height="15" rx="3" />
    <rect x="23" y="27" width="12" height="15" rx="3" />
    <path d="M27.500 4q2.500-3.500 5 0l5 6.500q1 1.500 0 3l-5 6.500q-2.500 3.500-5 0l-5-6.500q-1-1.500 0-3Z" />
  </svg>
);
const HeartIcon = () => (
  <svg {...navSvg}><path d="M40 17C40 8 36 3 30.500 3 27 3 25 4.500 23 8 21 4.500 18 3 15 3 9.500 3 6 8 6 16c0 9 7 19 14.500 25.500Q23 43.500 25.500 40.500M28.500 22H39M28.500 30H39M28.500 38H39" /></svg>
);

const PERIODS = ['分时', '1m', '5m', '30m', '1h', '日K', '更多'];
const TOPICS = ['期货吧', '资讯', '成交', '龙虎榜', '关联', '资料'];

export default function App() {
  const [period, setPeriod] = useState('分时');
  const [topic, setTopic] = useState('期货吧');
  const [scope, setScope] = useState('全部');
  const [sort, setSort] = useState('最新发帖');

  return (
    <Shell>
      <GlobalStyle />
      <Scroller>
        <StatusBar>
          <StatusGroup>
            <Clock>3:32</Clock>
            <MessageBadge />
          </StatusGroup>
          <StatusIcons />
        </StatusBar>

        <TitleBar>
          <BarSide $gap={20}>
            <IconButton aria-label="返回">
              <svg width="26" height="46" viewBox="0 0 26 46" fill="none" stroke="#333" strokeWidth="5" strokeLinecap="round"><path d="M23 3L3 23l20 20" /></svg>
            </IconButton>
            <Logo />
          </BarSide>
          <TitleStack>
            <Title>烧碱605(SH605)</Title>
            <Subtitle>
              <Tag>郑</Tag>
              <Tag>L1</Tag>
              已收盘
              <Chevron w={26} h={15} color="#999" />
            </Subtitle>
          </TitleStack>
          <BarSide $end $gap={49}>
            <IconButton aria-label="智能助手">
              <svg width="53" height="53" viewBox="0 0 53 53">
                <circle cx="26.500" cy="26.500" r="24" fill="none" stroke="#3f6ae8" strokeWidth="3.500" />
                <text x="11" y="36" fontSize="27" fontWeight="900" fill="#3a69f5" fontFamily="Roboto, sans-serif" fontStyle="italic">Aı</text>
                <path d="M37 12l1.600 3L42 16.500l-3.400 1.500L37 21l-1.600-3L32 16.500l3.400-1.500Z" fill="#3a69f5" />
              </svg>
            </IconButton>
            <IconButton aria-label="搜索">
              <svg width="49" height="49" viewBox="0 0 49 49" fill="none" stroke="#333" strokeWidth="4" strokeLinecap="round">
                <path d="M30 43.500A21.500 21.500 0 1 1 40 37.500" strokeLinecap="butt" />
                <path d="M36 36l10 10.500" />
              </svg>
            </IconButton>
          </BarSide>
        </TitleBar>

        <Quote>
          <PriceBlock>
            <BigPrice>2383</BigPrice>
            <PriceDelta><span>1.58%</span><span>37</span></PriceDelta>
          </PriceBlock>
          <Stats>
            {STATS.map(([name, value, tone]) => (
              <Stat key={name}>
                <StatName>{name}</StatName>
                <StatValue $tone={tone}>{value}</StatValue>
              </Stat>
            ))}
          </Stats>
          <Dots><Dot /><Dot /><Dot /></Dots>
        </Quote>

        <Notice>
          <svg width="38" height="36" viewBox="0 0 38 36">
            <defs>
              <linearGradient id="bolt" x1="0" y1="0" x2="0.6" y2="1">
                <stop offset="0" stopColor="#ff8210" />
                <stop offset="1" stopColor="#ff9c70" />
              </linearGradient>
            </defs>
            <path d="M8 0h22q8 0 8 8v20q0 8-8 8H0l1-28q0-8 7-8Z" fill="url(#bolt)" />
            <path d="M22 8L13 20h6l-2 9 9-12h-6Z" fill="#fff" />
          </svg>
          <NoticeText>
            休市时间为 15:00-21:00
            <NoticeLink href="#detail">详情&gt;&gt;</NoticeLink>
          </NoticeText>
          <Round $bg="#fddccd">2</Round>
          <Round $bg="#eaeaea" aria-label="展开"><Chevron w={24} h={15} color="#999" /></Round>
        </Notice>

        <PeriodBar>
          {PERIODS.map((p) => (
            <PeriodTab key={p} $active={p === period} onClick={() => setPeriod(p)}>
              {p}
              {(p === '分时' || p === '更多') && <Corner />}
            </PeriodTab>
          ))}
          <PeriodSettings aria-label="设置"><Gear size={42} color="#666" width={2.6} /></PeriodSettings>
        </PeriodBar>

        <Legend>
          <Avg>均价:2360</Avg>
          <span>最新:2383</span>
          <span>37</span>
          <span>1.58%</span>
          <LegendEye aria-label="显示">
            <svg width="40" height="26" viewBox="0 0 40 26" fill="none" stroke="#999" strokeWidth="3">
              <path d="M2 13C7 5 13 1.500 20 1.500S33 5 38 13c-5 8-11 11.500-18 11.500S7 21 2 13Z" />
              <path d="M21 6.500a6.500 6.500 0 1 1-6 9.500c3 0 6-4 6-9.500Z" fill="#999" stroke="none" />
            </svg>
          </LegendEye>
        </Legend>

        <Market>
          <ChartColumn>
            <PriceChart />
            <Handle aria-label="收起盘口"><Triangle $c="#fff" $w={15} $h={28} /></Handle>
            <VolumeHead>
              <SelectWrap>
                <Select aria-label="指标" defaultValue="成交量">
                  <option>成交量</option>
                  <option>持仓量</option>
                </Select>
                <SelectArrow><Chevron w={20} h={13} color="#666" width={2} /></SelectArrow>
              </SelectWrap>
              <span>50995</span>
              <Ma $c="#e6bd28">MA2:103↑</Ma>
              <Ma $c="#c72bc7">10:68↑</Ma>
            </VolumeHead>
            <VolumeChart />
            <Expand aria-label="全屏">
              <svg width="36" height="36" viewBox="0 0 36 36" fill="none" stroke="#f0561d" strokeWidth="3">
                <path d="M3 13V3h11M3 3l11 12M33 23v10H22M33 33L20 20" />
              </svg>
            </Expand>
            <AxisRow>
              <AxisLabel $align="left" $pad={13}>21:00</AxisLabel>
              <AxisLabel $align="center">09:00</AxisLabel>
              <AxisLabel $align="right" $pad={37}>13:30</AxisLabel>
              <AxisLabel $align="right" $pad={6}>15:00</AxisLabel>
            </AxisRow>
          </ChartColumn>

          <Side>
            <Banner href="#level2">升级level2看五档行情<Triangle $c="#ff510e" $w={11} $h={12} /></Banner>
            <BookRow><BookName>卖1</BookName><Colored $tone="red">2383</Colored><span>3</span></BookRow>
            <BookRow><BookName>买1</BookName><Colored $tone="red">2382</Colored><span>7</span></BookRow>
            <TickTitle>分时成交</TickTitle>
            <Ticks>
              <tbody>
                {TICKS.map((t, i) => (
                  <React.Fragment key={i}>
                    <tr>
                      <TimeCell>14:59</TimeCell>
                      <PriceCell $tone="red">
                        <PriceFlex>{t.price}{t.dir && <Arrow up={t.dir === 'up'} />}</PriceFlex>
                      </PriceCell>
                      <VolCell $tone={t.tone}>{t.vol}</VolCell>
                    </tr>
                    <tr>
                      <TimeCell $small>{t.sec}</TimeCell>
                      <PriceCell $tone={t.tone} $fill>{t.kind}</PriceCell>
                      <VolCell $tone="ink" $fill>{t.oi}</VolCell>
                    </tr>
                  </React.Fragment>
                ))}
              </tbody>
            </Ticks>
            <FilterRow>点此设置筛选条件<Gear size={32} color="#777" width={2.6} /></FilterRow>
            <SideTabs>
              <SideTab>分时成交</SideTab>
              <SideTab $active>大单筛选</SideTab>
            </SideTabs>
          </Side>
        </Market>

        <CommentBar>
          <CommentSettings aria-label="弹幕设置">
            <svg width="46" height="34" viewBox="0 0 46 34" fill="none" stroke="#666" strokeWidth="3">
              <path d="M1 3h9M13 3h22M1 17h17M1 31h5M9 31h8" />
              <path d="M25 8h13l6 11-6 12H25l-6-12Z" />
              <circle cx="31.500" cy="19" r="2.500" fill="#666" stroke="none" />
            </svg>
          </CommentSettings>
          <CommentField>
            <CommentInput aria-label="弹幕" placeholder="快来开启弹幕，参与讨论吧" />
            <DanmuButton>
              弹
              <DanmuOff width="18" height="18" viewBox="0 0 18 18">
                <circle cx="9" cy="9" r="7" fill="#fff" stroke="#666" strokeWidth="3" />
                <path d="M5 5l8 8" stroke="#666" strokeWidth="3" />
              </DanmuOff>
            </DanmuButton>
          </CommentField>
        </CommentBar>

        <TopicTabs>
          {TOPICS.map((t) => (
            <TopicTab key={t} $active={t === topic} onClick={() => setTopic(t)}>{t}</TopicTab>
          ))}
        </TopicTabs>

        <Feed>
          <Total>共有<Hot>8.7万</Hot>条帖子</Total>
          <FilterLine>
            <Segment>
              {['全部', '热帖'].map((s) => (
                <SegmentItem key={s} $active={s === scope} onClick={() => setScope(s)}>{s}</SegmentItem>
              ))}
            </Segment>
            <Toggle>
              {['最新评论', '最新发帖'].map((s) => (
                <ToggleItem key={s} $active={s === sort} onClick={() => setSort(s)}>{s}</ToggleItem>
              ))}
            </Toggle>
          </FilterLine>
          <Post>
            <PostTag>资讯</PostTag>
            <PostTitle>期市收评 | 商品期货多数上涨 有色板块涨幅居前</PostTitle>
          </Post>
        </Feed>
      </Scroller>

      <Dock>
        <IndexRow>
          <IndexName>烧碱加权</IndexName>
          <Colored $tone="red">2276</Colored>
          <Colored $tone="red">1.60%</Colored>
          <Colored $tone="red">36</Colored>
          <IndexAmount>523.43亿</IndexAmount>
          <Chevron w={29} h={18} color="#bdbdbd" width={3} up />
        </IndexRow>
        <DockNav>
          <TradeButton>交易下单</TradeButton>
          <NavItem><NavIcon><BellIcon /></NavIcon>提醒</NavItem>
          <NavItem><NavIcon><PostIcon /></NavIcon>发帖</NavItem>
          <NavItem><NavIcon><MoreIcon /><RedDot /></NavIcon>更多</NavItem>
          <NavItem><NavIcon><HeartIcon /></NavIcon>设自选</NavItem>
        </DockNav>
      </Dock>
    </Shell>
  );
}
